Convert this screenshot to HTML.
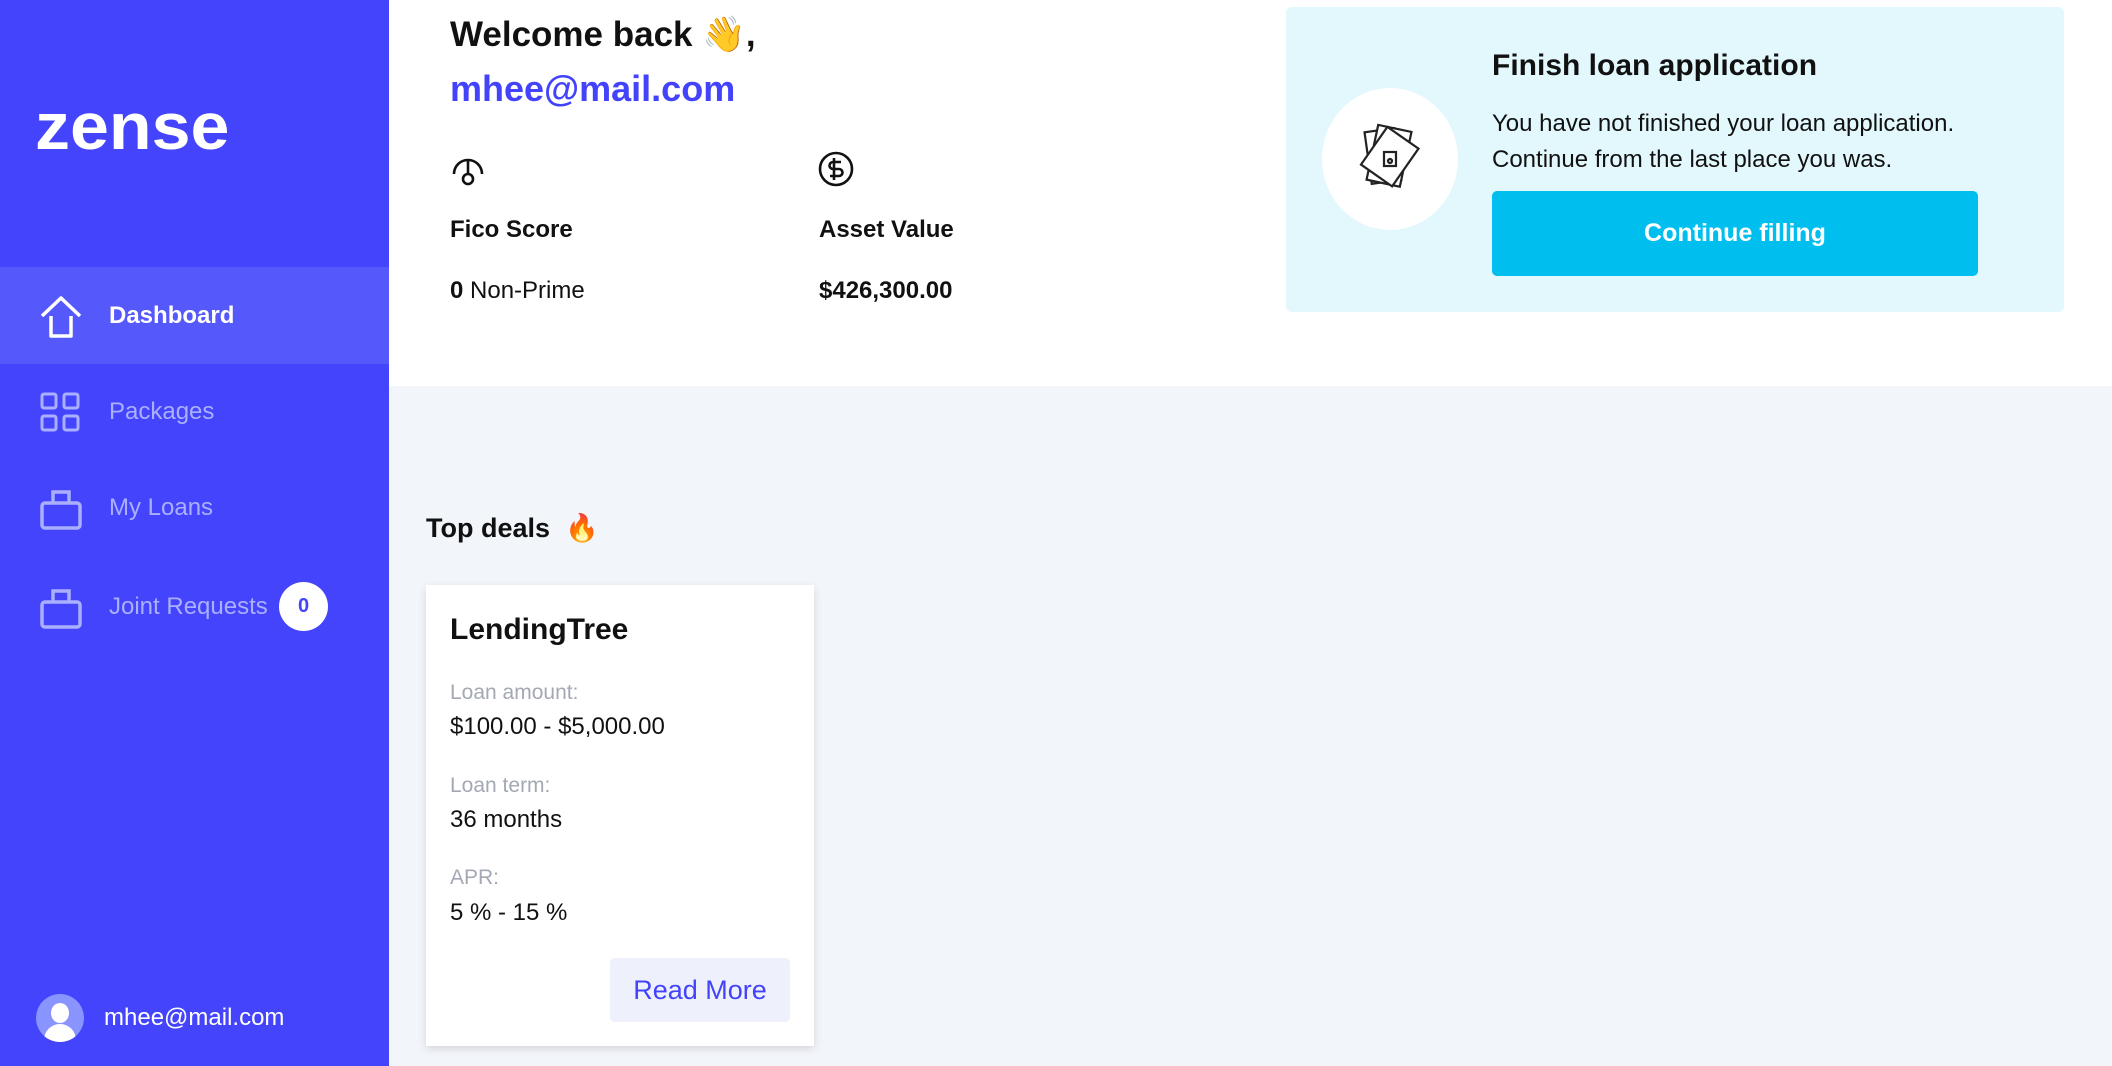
<!DOCTYPE html>
<html><head><meta charset="utf-8"><style>
*{margin:0;padding:0;box-sizing:border-box}
body{width:2112px;height:1066px;overflow:hidden;font-family:"Liberation Sans",sans-serif;background:#fff;position:relative;color:#111}
.a{position:absolute;white-space:nowrap}
#side{position:absolute;left:0;top:0;width:389px;height:1066px;background:#4444fc}
.nav{position:absolute;left:0;width:389px;height:97px}
.nav span{position:absolute;left:109px;top:0;line-height:97px;font-size:24px;color:#aab0ff}
.nav svg{position:absolute;left:38px;top:27px}
</style></head><body>
<div id="side">
  <div class="a" style="left:35px;top:90px;font-size:66px;font-weight:bold;color:#fff;line-height:72px;transform:scaleX(1.06);transform-origin:left">zense</div>
  <div class="nav" style="top:267px;background:#5558fb"><svg width="46" height="46" viewBox="0 0 46 46" fill="none" stroke="#fff" stroke-width="3.5" stroke-linejoin="round"><path d="M4 22 L23 4 L42 22 M13 22 V42 H33 V22"/></svg><span style="color:#fff;font-weight:bold">Dashboard</span></div>
  <div class="nav" style="top:363px"><svg width="44" height="44" viewBox="0 0 44 44" fill="none" stroke="#aab0ff" stroke-width="3"><rect x="4" y="4" width="14" height="14" rx="2"/><rect x="26" y="4" width="14" height="14" rx="2"/><rect x="4" y="26" width="14" height="14" rx="2"/><rect x="26" y="26" width="14" height="14" rx="2"/></svg><span>Packages</span></div>
  <div class="nav" style="top:459px"><svg width="46" height="46" viewBox="0 0 46 46" fill="none" stroke="#aab0ff" stroke-width="3.5"><rect x="4" y="17" width="38" height="25" rx="3"/><path d="M15 17 V6 H31 V17"/></svg><span>My Loans</span></div>
  <div class="nav" style="top:558px"><svg width="46" height="46" viewBox="0 0 46 46" fill="none" stroke="#aab0ff" stroke-width="3.5"><rect x="4" y="17" width="38" height="25" rx="3"/><path d="M15 17 V6 H31 V17"/></svg><span>Joint Requests</span>
    <div class="a" style="left:279px;top:24px;width:49px;height:49px;border-radius:50%;background:#fff;color:#4444fc;font-size:20px;font-weight:bold;text-align:center;line-height:49px">0</div></div>
  <div class="a" style="left:36px;top:994px;width:48px;height:48px;border-radius:50%;background:#8a94ff;overflow:hidden">
    <div class="a" style="left:15px;top:9px;width:18px;height:20px;border-radius:50%;background:#fff"></div>
    <div class="a" style="left:8px;top:30px;width:32px;height:24px;border-radius:16px 16px 0 0;background:#fff"></div></div>
  <div class="a" style="left:104px;top:1003px;font-size:24px;color:#fff;line-height:30px">mhee@mail.com</div>
</div>

<div class="a" style="left:389px;top:386px;width:1723px;height:680px;background:#f2f5fa"></div>

<div class="a" style="left:450px;top:14px;font-size:35px;font-weight:bold;line-height:42px">Welcome back 👋,</div>
<div class="a" style="left:450px;top:68px;font-size:36px;font-weight:bold;color:#4343fb;line-height:42px">mhee@mail.com</div>
<svg class="a" style="left:449px;top:150px" width="38" height="38" viewBox="0 0 38 38" fill="none" stroke="#111" stroke-width="2.6"><path d="M5 24 A14 14 0 1 1 33 24"/><path d="M19 10 V24"/><circle cx="19" cy="29" r="5"/></svg>
<svg class="a" style="left:817px;top:150px" width="38" height="38" viewBox="0 0 38 38" fill="none" stroke="#111" stroke-width="2.6"><circle cx="19" cy="19" r="16"/><path d="M24 12 H16 A3.5 3.5 0 0 0 16 19 H22 A3.5 3.5 0 0 1 22 26 H13 M17 8 V30"/></svg>
<div class="a" style="left:450px;top:216px;font-size:24px;font-weight:bold;line-height:28px">Fico Score</div>
<div class="a" style="left:819px;top:216px;font-size:24px;font-weight:bold;line-height:28px">Asset Value</div>
<div class="a" style="left:450px;top:277px;font-size:24px;line-height:28px"><b>0</b> Non-Prime</div>
<div class="a" style="left:819px;top:277px;font-size:24px;font-weight:bold;line-height:28px">$426,300.00</div>

<div class="a" style="left:1286px;top:7px;width:778px;height:305px;background:#e2f8fd;border-radius:6px"></div>
<div class="a" style="left:1322px;top:88px;width:136px;height:142px;border-radius:50%;background:#fff"></div>
<svg class="a" style="left:1350px;top:118px" width="80" height="82" viewBox="0 0 80 82" fill="#fff" stroke="#222" stroke-width="2.2"><rect x="18" y="12" width="30" height="52" transform="rotate(-8 33 38)"/><rect x="22" y="10" width="34" height="56" transform="rotate(12 40 38)"/><rect x="20" y="16" width="38" height="46" transform="rotate(35 40 40)"/><rect x="34" y="34" width="12" height="14" fill="none"/><circle cx="40" cy="43" r="2" fill="none"/></svg>
<div class="a" style="left:1492px;top:48px;font-size:30px;font-weight:bold;line-height:36px">Finish loan application</div>
<div class="a" style="left:1492px;top:109px;font-size:24px;line-height:30px">You have not finished your loan application.</div>
<div class="a" style="left:1492px;top:145px;font-size:24px;line-height:30px">Continue from the last place you was.</div>
<div class="a" style="left:1492px;top:191px;width:486px;height:85px;background:#00bfee;border-radius:5px;color:#fff;font-size:25px;font-weight:bold;text-align:center;line-height:85px">Continue filling</div>

<div class="a" style="left:426px;top:512px;font-size:27px;font-weight:bold;line-height:32px">Top deals &nbsp;🔥</div>
<div class="a" style="left:426px;top:585px;width:388px;height:461px;background:#fff;box-shadow:0 3px 8px rgba(0,0,0,0.12)"></div>
<div class="a" style="left:450px;top:612px;font-size:30px;font-weight:bold;line-height:36px">LendingTree</div>
<div class="a" style="left:450px;top:680px;font-size:21px;color:#a4a8b4;line-height:26px">Loan amount:</div>
<div class="a" style="left:450px;top:713px;font-size:24px;line-height:28px">$100.00 - $5,000.00</div>
<div class="a" style="left:450px;top:773px;font-size:21px;color:#a4a8b4;line-height:26px">Loan term:</div>
<div class="a" style="left:450px;top:806px;font-size:24px;line-height:28px">36 months</div>
<div class="a" style="left:450px;top:865px;font-size:21px;color:#a4a8b4;line-height:26px">APR:</div>
<div class="a" style="left:450px;top:899px;font-size:24px;line-height:28px">5 % - 15 %</div>
<div class="a" style="left:610px;top:958px;width:180px;height:64px;background:#eef0fb;border-radius:5px;color:#4343fb;font-size:27px;text-align:center;line-height:64px">Read More</div>
</body></html>
